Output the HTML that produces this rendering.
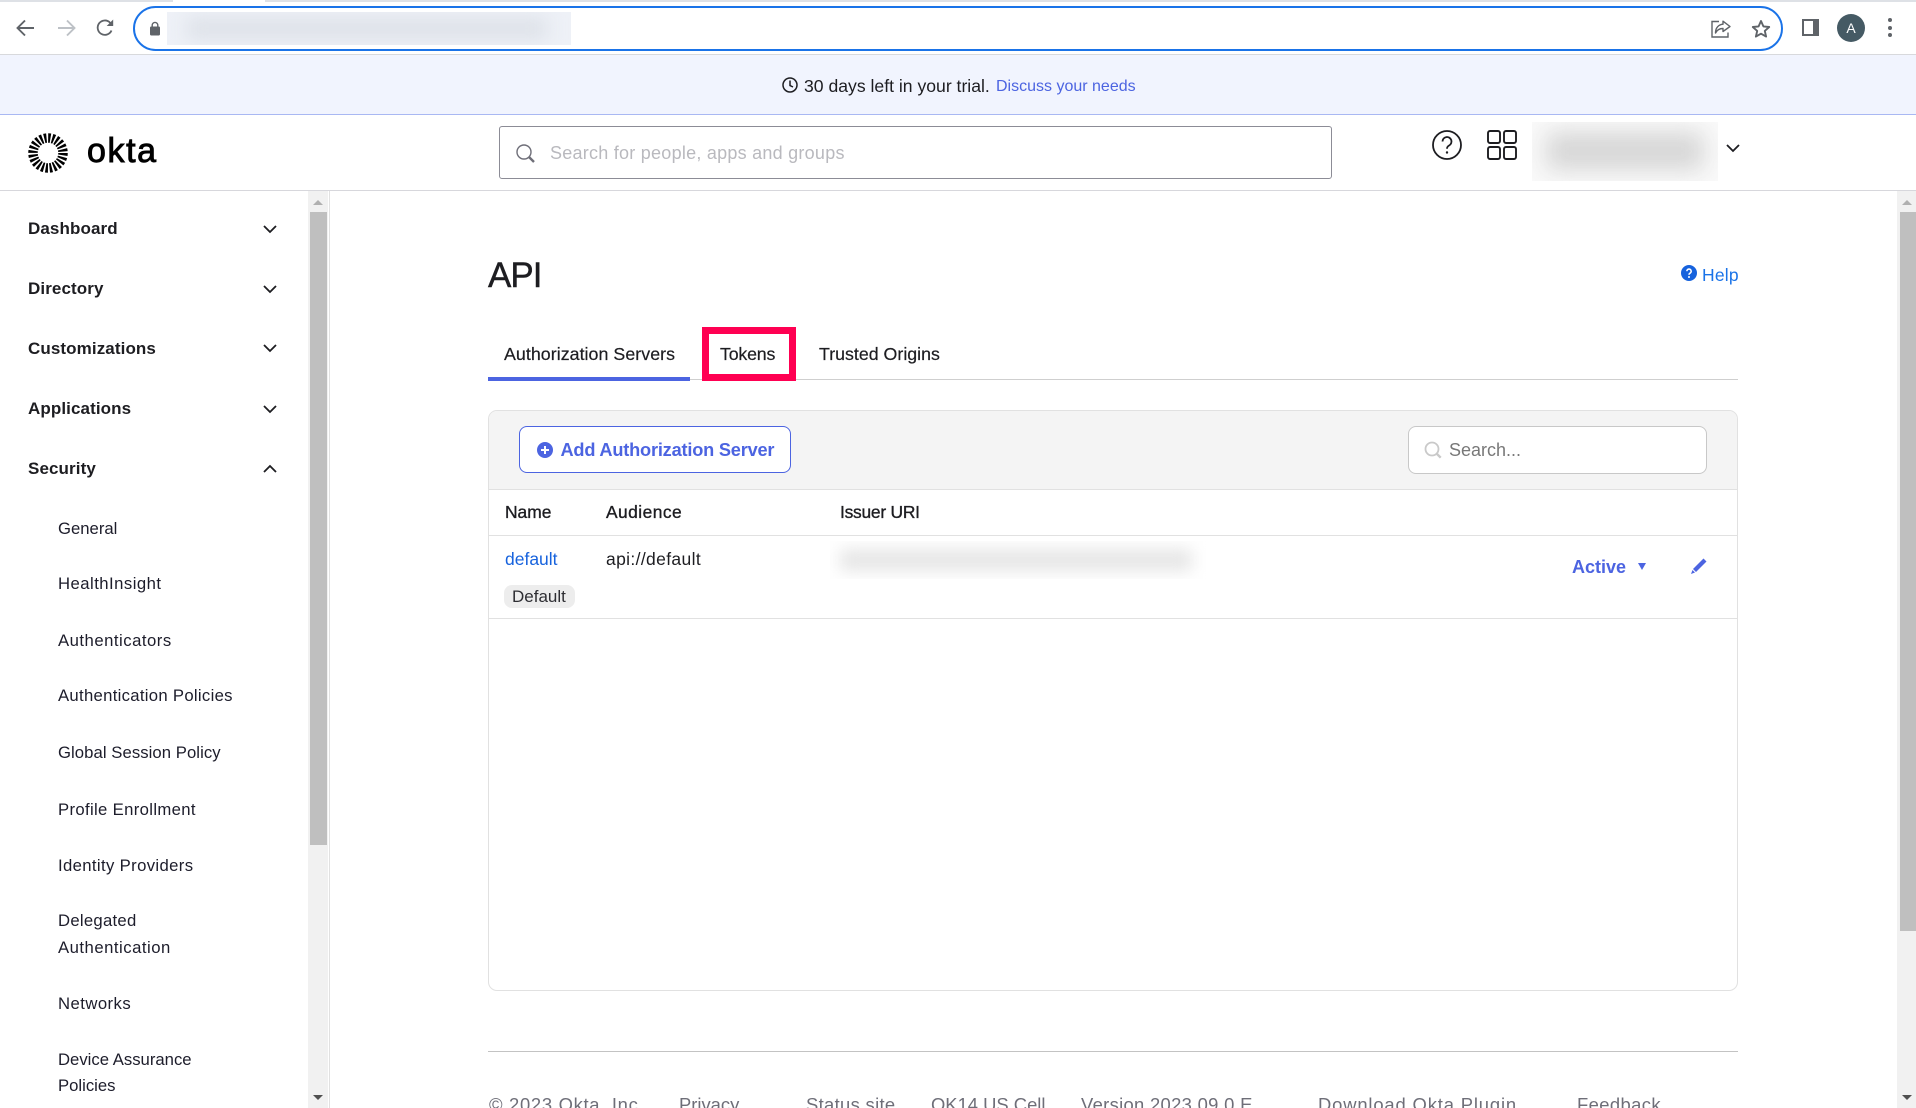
<!DOCTYPE html>
<html lang="en"><head><meta charset="utf-8"><title>API - Okta</title>
<style>
html,body{margin:0;padding:0;width:1916px;height:1108px;overflow:hidden;background:#fff;font-family:"Liberation Sans",sans-serif;color:#1d1d21}
.a{position:absolute}
.t{position:absolute;white-space:nowrap;line-height:24px;height:24px}
.nav{font-size:17px;font-weight:bold;left:28px;letter-spacing:.1px}
.sub{font-size:16.7px;left:58px;color:#1d1d2b}
.tab{font-size:17.8px;top:342px;-webkit-text-stroke:.2px #1d1d21}
.th{font-size:17.4px;top:500px;-webkit-text-stroke:.35px #1d1d21}
.ft{font-size:18.4px;top:1093px;color:#6e6e78}
svg{position:absolute;display:block;overflow:visible}
</style></head><body>
<div class="a" style="left:0;top:0;width:1916px;height:1108px;overflow:hidden">

<!-- chrome -->
<div class="a" style="left:0;top:0;width:173px;height:2px;background:#dee1e6"></div>
<div class="a" style="left:265px;top:0;width:1651px;height:2px;background:#dee1e6"></div>
<div class="a" style="left:0;top:54px;width:1916px;height:1px;background:#d8d9dc"></div>
<svg style="left:14px;top:18px" width="24" height="20" fill="none" stroke="#5f6368" stroke-width="1.9"><path d="M3.5 10H20M11 2.5 3.5 10l7.5 7.5"/></svg>
<svg style="left:54px;top:18px" width="24" height="20" fill="none" stroke="#bdc1c6" stroke-width="1.9"><path d="M20.5 10H4M13 2.5l7.5 7.5-7.5 7.5"/></svg>
<svg style="left:95px;top:18px" width="20" height="20" fill="none" stroke="#5f6368" stroke-width="1.8"><path d="M16.5 12.5A7.2 7.2 0 1 1 15 4.6L17.5 7"/><path d="M18.2 1.5V8h-6.5z" fill="#5f6368" stroke="none"/></svg>
<div class="a" style="left:133px;top:6px;width:1650px;height:45px;box-sizing:border-box;border:2.2px solid #1a73e8;border-radius:23px;background:#fff"></div>
<svg style="left:149px;top:21px" width="12" height="15"><path d="M3.2 6V4.2a2.8 2.8 0 0 1 5.6 0V6" fill="none" stroke="#5f6368" stroke-width="1.4"/><rect x="1" y="5.5" width="10" height="9" rx="1.2" fill="#5f6368"/></svg>
<div class="a" style="left:167px;top:12px;width:404px;height:33px;overflow:hidden;background:#eef1f7"><div class="a" style="left:20px;top:6px;width:360px;height:21px;background:#dde1e8;filter:blur(9px)"></div></div>
<svg style="left:1711px;top:20px" width="20" height="18" fill="none" stroke="#5f6368" stroke-width="1.4"><path d="M8 1.5H1v15.5h16v-4.5"/><path d="M12 1.2 19 6.5 12 11.5V8.5C8.5 8.5 6 10 4.5 13 4.5 8 7.5 4.5 12 4.2z" stroke-linejoin="round"/></svg>
<svg style="left:1751px;top:19px" width="20" height="19" fill="none" stroke="#5f6368" stroke-width="1.9"><path d="m10 2 2.4 5.4 5.8.6-4.4 3.9 1.3 5.7L10 14.7l-5.1 2.9 1.3-5.7L1.8 8l5.8-.6z" stroke-linejoin="round"/></svg>
<div class="a" style="left:1802px;top:19px;width:17px;height:17px;box-sizing:border-box;background:#5f6368;padding:2px 6px 2px 2px"><div style="width:100%;height:100%;background:#fff"></div></div>
<div class="a" style="left:1837px;top:14px;width:28px;height:28px;border-radius:50%;background:#455a64;color:#fff;font-size:14px;line-height:28px;text-align:center">A</div>
<div class="a" style="left:1888px;top:18px;width:4px;height:4px;border-radius:50%;background:#5f6368"></div>
<div class="a" style="left:1888px;top:26px;width:4px;height:4px;border-radius:50%;background:#5f6368"></div>
<div class="a" style="left:1888px;top:33px;width:4px;height:4px;border-radius:50%;background:#5f6368"></div>

<!-- banner -->
<div class="a" style="left:0;top:55px;width:1916px;height:59px;background:#f1f4fe"></div>
<div class="a" style="left:0;top:114px;width:1916px;height:1px;background:#a9b8f3"></div>
<svg style="left:781px;top:76px" width="18" height="18" fill="none" stroke="#1d1d21" stroke-width="1.5"><circle cx="9" cy="9" r="7"/><path d="M9 4.5V9.5L12 11"/></svg>
<div class="t" style="left:804px;top:74px;font-size:17.6px">30 days left in your trial.</div>
<div class="t" style="left:996px;top:75px;font-size:16px;color:#4c64e1">Discuss your needs</div>

<!-- header -->
<div class="a" style="left:0;top:190px;width:1916px;height:1px;background:#d7d7dc"></div>
<svg style="left:28px;top:133px" width="40" height="40" fill="none"><circle cx="20" cy="20" r="15" stroke="#000" stroke-width="9.5" stroke-dasharray="2.3 1.63"/></svg>
<div class="t" style="left:87px;top:131px;font-size:34px;line-height:40px;height:40px;letter-spacing:1.6px;color:#000;-webkit-text-stroke:.9px #000">okta</div>
<div class="a" style="left:499px;top:126px;width:833px;height:53px;box-sizing:border-box;border:1px solid #8c8c96;border-radius:3px;background:#fff"></div>
<svg style="left:515px;top:143px" width="22" height="22" fill="none" stroke="#6e6e78" stroke-width="1.4"><circle cx="9" cy="9" r="7"/><path d="M14 14l5 5" stroke-width="2.4"/></svg>
<div class="t" style="left:550px;top:141px;font-size:18px;letter-spacing:.25px;color:#b9b9be">Search for people, apps and groups</div>
<svg style="left:1432px;top:130px" width="30" height="30" fill="none" stroke="#1d1d21" stroke-width="1.8"><circle cx="15" cy="15" r="14"/><path d="M10.5 11.5a4.5 4.5 0 1 1 6.6 4c-1.5.8-2.1 1.6-2.1 3.3"/><circle cx="15" cy="22.5" r="1.2" fill="#1d1d21" stroke="none"/></svg>
<svg style="left:1487px;top:130px" width="30" height="30" fill="none" stroke="#1d1d21" stroke-width="1.9"><rect x="1" y="1" width="12" height="12" rx="2"/><rect x="17" y="1" width="12" height="12" rx="2"/><rect x="1" y="17" width="12" height="12" rx="2"/><rect x="17" y="17" width="12" height="12" rx="2"/></svg>
<div class="a" style="left:1532px;top:122px;width:186px;height:59px;overflow:hidden;background:#fafafa"><div class="a" style="left:14px;top:10px;width:158px;height:38px;background:#d6d6d6;filter:blur(12px)"></div></div>
<svg style="left:1726px;top:144px" width="14" height="9" fill="none" stroke="#1d1d21" stroke-width="1.8"><path d="M1 1l6 6 6-6"/></svg>

<!-- sidebar -->
<div class="a" style="left:308px;top:191px;width:20px;height:917px;background:#f1f1f1"></div>
<div class="a" style="left:310px;top:212px;width:17px;height:633px;background:#bfbfbf"></div>
<div class="a" style="left:329px;top:191px;width:1px;height:917px;background:#e1e1e1"></div>
<div class="a" style="left:313px;top:200px;width:0;height:0;border:5px solid transparent;border-top:0;border-bottom:5px solid #b0b0b0"></div>
<div class="a" style="left:313px;top:1095px;width:0;height:0;border:5px solid transparent;border-bottom:0;border-top:5px solid #505050"></div>

<div class="t nav" style="top:217px">Dashboard</div>
<div class="t nav" style="top:277px">Directory</div>
<div class="t nav" style="top:337px">Customizations</div>
<div class="t nav" style="top:397px">Applications</div>
<div class="t nav" style="top:457px">Security</div>
<svg style="left:263px;top:225px" width="14" height="9" fill="none" stroke="#1d1d21" stroke-width="1.8"><path d="M1 1l6 6 6-6"/></svg>
<svg style="left:263px;top:285px" width="14" height="9" fill="none" stroke="#1d1d21" stroke-width="1.8"><path d="M1 1l6 6 6-6"/></svg>
<svg style="left:263px;top:344px" width="14" height="9" fill="none" stroke="#1d1d21" stroke-width="1.8"><path d="M1 1l6 6 6-6"/></svg>
<svg style="left:263px;top:405px" width="14" height="9" fill="none" stroke="#1d1d21" stroke-width="1.8"><path d="M1 1l6 6 6-6"/></svg>
<svg style="left:263px;top:464px" width="14" height="9" fill="none" stroke="#1d1d21" stroke-width="1.8"><path d="M1 8l6-6 6 6"/></svg>

<div class="t sub" style="top:517px">General</div>
<div class="t sub" style="top:572px;letter-spacing:.47px">HealthInsight</div>
<div class="t sub" style="top:629px;letter-spacing:.5px">Authenticators</div>
<div class="t sub" style="top:684px;letter-spacing:.3px">Authentication Policies</div>
<div class="t sub" style="top:741px;letter-spacing:.06px">Global Session Policy</div>
<div class="t sub" style="top:798px;letter-spacing:.34px">Profile Enrollment</div>
<div class="t sub" style="top:854px;letter-spacing:.36px">Identity Providers</div>
<div class="t sub" style="top:909px;letter-spacing:.27px">Delegated</div>
<div class="t sub" style="top:936px;letter-spacing:.5px">Authentication</div>
<div class="t sub" style="top:992px;letter-spacing:.45px">Networks</div>
<div class="t sub" style="top:1048px">Device Assurance</div>
<div class="t sub" style="top:1074px">Policies</div>

<!-- main heading -->
<div class="t" style="left:488px;top:255px;font-size:35px;line-height:42px;height:42px;letter-spacing:-1px;-webkit-text-stroke:.4px #1d1d21">API</div>
<svg style="left:1681px;top:265px" width="16" height="16"><circle cx="8" cy="8" r="8" fill="#1662dd"/><path d="M5.8 6.2a2.2 2.2 0 1 1 3.4 1.9c-.8.5-1.2.9-1.2 1.7" fill="none" stroke="#fff" stroke-width="1.6"/><circle cx="8" cy="12" r="1" fill="#fff"/></svg>
<div class="t" style="left:1702px;top:263px;font-size:17.5px;letter-spacing:.2px;color:#1a73e8">Help</div>

<!-- tabs -->
<div class="a" style="left:488px;top:379px;width:1250px;height:1px;background:#cfcfcf"></div>
<div class="a" style="left:488px;top:377px;width:202px;height:4px;background:#4c64e1"></div>
<div class="t tab" style="left:504px;letter-spacing:.05px">Authorization Servers</div>
<div class="t tab" style="left:720px;letter-spacing:-.2px">Tokens</div>
<div class="t tab" style="left:819px">Trusted Origins</div>
<div class="a" style="left:702px;top:327px;width:94px;height:54px;box-sizing:border-box;border:7px solid #ff0052"></div>

<!-- panel -->
<div class="a" style="left:488px;top:410px;width:1250px;height:581px;box-sizing:border-box;border:1px solid #e1e1e1;border-radius:9px;overflow:hidden;background:#fff">
  <div class="a" style="left:0;top:0;width:1248px;height:78px;background:#f4f4f4;border-bottom:1px solid #e1e1e1"></div>
  <div class="a" style="left:0;top:124px;width:1248px;height:1px;background:#e1e1e1"></div>
  <div class="a" style="left:0;top:207px;width:1248px;height:1px;background:#e1e1e1"></div>
</div>
<div class="a" style="left:519px;top:426px;width:272px;height:47px;box-sizing:border-box;border:1.4px solid #4c64e1;border-radius:8px;background:#fff"></div>
<svg style="left:537px;top:442px" width="16" height="16"><circle cx="8" cy="8" r="8" fill="#4c64e1"/><path d="M8 4v8M4 8h8" stroke="#fff" stroke-width="2"/></svg>
<div class="t" style="left:560.5px;top:438px;font-size:18.2px;letter-spacing:-.2px;font-weight:bold;color:#4c64e1">Add Authorization Server</div>
<div class="a" style="left:1408px;top:426px;width:299px;height:48px;box-sizing:border-box;border:1px solid #c8c8c8;border-radius:8px;background:#fff"></div>
<svg style="left:1424px;top:441px" width="19" height="19" fill="none" stroke="#c9c9c9" stroke-width="1.8"><circle cx="8" cy="8" r="6.5"/><path d="M12.7 12.7l4 4" stroke-width="2.4"/></svg>
<div class="t" style="left:1449px;top:438px;font-size:18px;color:#787878">Search...</div>

<div class="t th" style="left:505px">Name</div>
<div class="t th" style="left:606px;letter-spacing:.45px">Audience</div>
<div class="t th" style="left:840px;letter-spacing:-.24px">Issuer URI</div>

<div class="t" style="left:505px;top:547px;font-size:17.5px;color:#1662dd">default</div>
<div class="t" style="left:606px;top:547px;font-size:17.5px;letter-spacing:.35px">api://default</div>
<div class="a" style="left:504px;top:585px;width:71px;height:23px;background:#ededed;border-radius:8px"></div>
<div class="t" style="left:512px;top:585px;font-size:17px;color:#2e2e33">Default</div>
<div class="a" style="left:830px;top:541px;width:376px;height:38px;overflow:hidden"><div class="a" style="left:10px;top:8px;width:352px;height:22px;background:#e6e6e6;filter:blur(8px)"></div></div>
<div class="t" style="left:1572px;top:555px;font-size:18px;font-weight:bold;color:#4c64e1">Active</div>
<div class="a" style="left:1638px;top:563px;width:0;height:0;border:4px solid transparent;border-bottom:0;border-top:7px solid #4c64e1"></div>
<svg style="left:1691px;top:558px" width="16" height="16"><path d="M12.5.5l3 3L5 14l-3-3zM1.5 12l2.5 2.5L0 16z" fill="#4c64e1"/></svg>

<!-- footer -->
<div class="a" style="left:488px;top:1051px;width:1250px;height:1px;background:#c3c3c3"></div>
<div class="t ft" style="left:489px;letter-spacing:.7px">© 2023 Okta, Inc.</div>
<div class="t ft" style="left:679px">Privacy</div>
<div class="t ft" style="left:806px;letter-spacing:.33px">Status site</div>
<div class="t ft" style="left:931px">OK14 US Cell</div>
<div class="t ft" style="left:1081px;letter-spacing:.32px">Version 2023.09.0 E</div>
<div class="t ft" style="left:1318px;letter-spacing:.85px">Download Okta Plugin</div>
<div class="t ft" style="left:1577px;letter-spacing:.4px">Feedback</div>

<!-- page scrollbar -->
<div class="a" style="left:1897px;top:191px;width:19px;height:917px;background:#f1f1f1"></div>
<div class="a" style="left:1900px;top:212px;width:16px;height:719px;background:#bfbfbf"></div>
<div class="a" style="left:1902px;top:200px;width:0;height:0;border:5px solid transparent;border-top:0;border-bottom:5px solid #b0b0b0"></div>
<div class="a" style="left:1902px;top:1095px;width:0;height:0;border:5px solid transparent;border-bottom:0;border-top:5px solid #505050"></div>
</div>
</body></html>
